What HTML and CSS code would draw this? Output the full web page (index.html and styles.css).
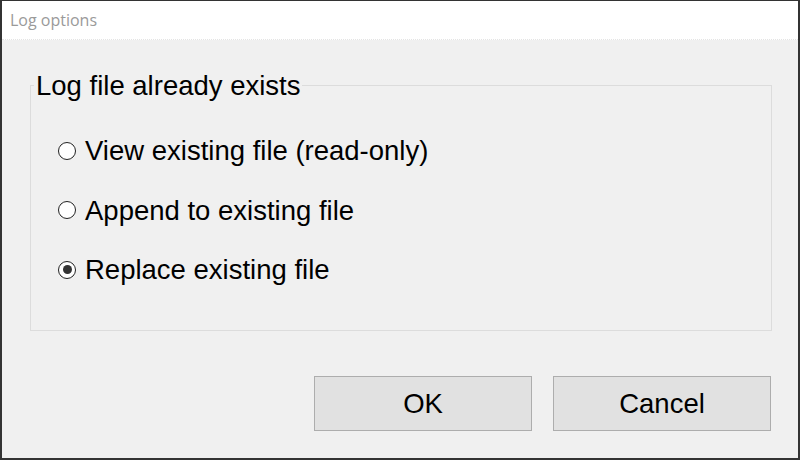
FILE: index.html
```html
<!DOCTYPE html>
<html>
<head>
<meta charset="utf-8">
<link rel="stylesheet" href="styles.css">
</head>
<body>
<div class="window">
  <div class="titlebar">Log options</div>
  <div class="content">
    <fieldset class="group">
      <legend class="legend">Log file already exists</legend>
      <div class="options">
        <label class="option"><span class="radio"></span>View existing file (read-only)</label>
        <label class="option"><span class="radio"></span>Append to existing file</label>
        <label class="option"><span class="radio checked"></span>Replace existing file</label>
      </div>
    </fieldset>
    <div class="buttons">
      <button class="btn">OK</button>
      <button class="btn">Cancel</button>
    </div>
  </div>
</div>
</body>
</html>
```

FILE: styles.css
```css
html, body {
  margin: 0;
  padding: 0;
  background: #f0f0f0;
}
.window {
  width: 800px;
  height: 460px;
  box-sizing: border-box;
  border-style: solid;
  border-color: #333333;
  border-width: 1px 2px 2px 2px;
  display: flex;
  flex-direction: column;
  background: #f0f0f0;
  font-family: "Liberation Sans", Arial, sans-serif;
  color: #000;
}
.titlebar {
  height: 39px;
  flex: none;
  box-sizing: border-box;
  background: #ffffff;
  border-bottom: 1px dotted #e4e4e4;
  padding-left: 8px;
  padding-top: 8px;
  font-family: "Open Sans", sans-serif;
  font-size: 16px;
  line-height: 22px;
  color: #9a9a9a;
}
.content {
  flex: 1;
  display: flex;
  flex-direction: column;
}
.group {
  margin: 30px 26px 0 28px;
  padding: 0 0 45px 27px;
  border: 1px solid #dcdcdc;
  min-width: 0;
}
.legend {
  margin-left: -24px;
  padding: 0 2px;
  font-size: 27.5px;
  line-height: 31px;
}
.options {
  display: flex;
  flex-direction: column;
  gap: 28.5px;
  padding-top: 34px;
}
.option {
  display: flex;
  align-items: center;
  font-size: 27.5px;
  line-height: 31px;
  height: 31px;
}
.radio {
  width: 18px;
  height: 18px;
  box-sizing: border-box;
  border: 1.5px solid #222;
  border-radius: 50%;
  background: #fff;
  margin-right: 9px;
  display: flex;
  align-items: center;
  justify-content: center;
  flex: none;
}
.radio.checked::after {
  content: "";
  width: 9px;
  height: 9px;
  border-radius: 50%;
  background: #333;
}
.buttons {
  display: flex;
  justify-content: flex-end;
  gap: 21px;
  margin: 45px 27px 0 0;
}
.btn {
  width: 218px;
  height: 55px;
  box-sizing: border-box;
  background: #e1e1e1;
  border: 1px solid #adadad;
  font-family: "Liberation Sans", Arial, sans-serif;
  font-size: 27.5px;
  color: #000;
  padding: 0;
}
```
